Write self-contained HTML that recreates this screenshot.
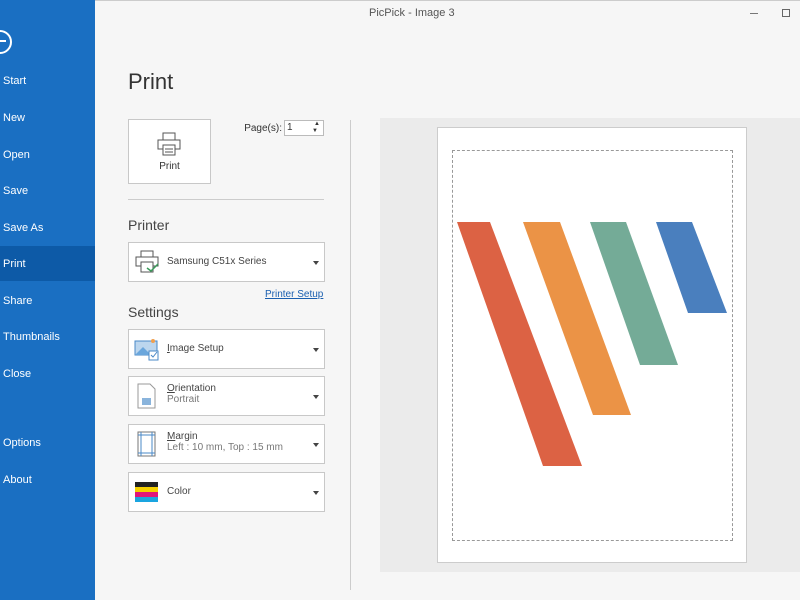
<!DOCTYPE html>
<html><head><style>
body{margin:0;width:800px;height:600px;overflow:hidden;background:#f6f6f6;font-family:"Liberation Sans",sans-serif;position:relative}
.a{position:absolute}
#side{left:0;top:0;width:95px;height:600px;background:#1a6fc2}
.mi{position:absolute;left:3px;color:#fff;font-size:11px}
.box{position:absolute;left:128px;width:195px;background:#fff;border:1px solid #c8c8c8}
.lbl{position:absolute;left:38px;font-size:10px;color:#444}
.sub{color:#777}
.arr{position:absolute;right:5px;width:0;height:0;border-left:3px solid transparent;border-right:3px solid transparent;border-top:4px solid #444}
</style></head><body>
<div class="a" style="left:0;top:0;width:800px;height:1px;background:#ccc"></div>
<div id="side" class="a">
<div class="a" style="left:-12px;top:30px;width:20px;height:20px;border:2px solid #fff;border-radius:50%"></div>
<div class="a" style="left:0;top:40px;width:6px;height:2px;background:#fff"></div>
<div class="a" style="left:0;top:246px;width:95px;height:35px;background:#0d5aa7"></div>
<div class="mi" style="top:75px">Start</div>
<div class="mi" style="top:112px">New</div>
<div class="mi" style="top:149px">Open</div>
<div class="mi" style="top:185px">Save</div>
<div class="mi" style="top:222px">Save As</div>
<div class="mi" style="top:258px">Print</div>
<div class="mi" style="top:295px">Share</div>
<div class="mi" style="top:331px">Thumbnails</div>
<div class="mi" style="top:368px">Close</div>
<div class="mi" style="top:437px">Options</div>
<div class="mi" style="top:474px">About</div>
</div>
<div class="a" style="left:369px;top:7px;font-size:11px;color:#555">PicPick - Image 3</div>
<div class="a" style="left:750px;top:13px;width:8px;height:1px;background:#777"></div>
<div class="a" style="left:782px;top:9px;width:6px;height:6px;border:1px solid #666"></div>
<div class="a" style="left:128px;top:69px;font-size:22px;color:#333">Print</div>
<div class="a" style="left:128px;top:119px;width:81px;height:63px;background:#fff;border:1px solid #c8c8c8">
<svg class="a" style="left:27px;top:12px" width="26" height="24" viewBox="0 0 26 24" fill="none" stroke="#555"><rect x="7" y="1" width="12" height="7"/><rect x="2" y="8" width="22" height="9" fill="#fff"/><rect x="7" y="13" width="12" height="10" fill="#fff"/><line x1="9" y1="17" x2="17" y2="17"/><line x1="9" y1="20" x2="17" y2="20"/></svg>
<div class="a" style="left:0;width:81px;top:41px;text-align:center;font-size:10px;color:#333">Print</div></div>
<div class="a" style="left:230px;width:52px;text-align:right;top:123px;font-size:10px;color:#333;white-space:nowrap">Page(s):</div>
<div class="a" style="left:284px;top:120px;width:38px;height:14px;background:#fff;border:1px solid #bbb;font-size:10px;color:#333;line-height:14px;text-indent:2px">1<span class="a" style="right:3px;top:0;font-size:6px;line-height:7px">▲<br>▼</span></div>
<div class="a" style="left:128px;top:199px;width:196px;height:1px;background:#ccc"></div>
<div class="a" style="left:128px;top:217px;font-size:14px;color:#444">Printer</div>
<div class="box" style="top:242px;height:38px">
<svg class="a" style="left:6px;top:7px" width="26" height="24" viewBox="0 0 26 24" fill="none" stroke="#555"><rect x="6" y="1" width="12" height="6"/><rect x="1" y="7" width="22" height="9" fill="#fff"/><rect x="6" y="12" width="12" height="10" fill="#fff"/><path d="M12 18l4 3 7-7" stroke="#3a9a5a" stroke-width="1.5"/></svg>
<div class="lbl" style="top:13px">Samsung C51x Series</div><div class="arr" style="top:18px"></div></div>
<div class="a" style="left:265px;top:289px;font-size:10px;color:#1a5fb0;text-decoration:underline">Printer Setup</div>
<div class="a" style="left:128px;top:304px;font-size:14px;color:#444">Settings</div>
<div class="box" style="top:329px;height:38px">
<svg class="a" style="left:5px;top:8px" width="26" height="24"><rect x="1" y="3" width="22" height="14" fill="#bcd6ee" stroke="#4a88c7"/><path d="M1 17l8-8 8 8z" fill="#6aa6dc"/><circle cx="19" cy="3" r="2" fill="#f0a050"/><rect x="15" y="13" width="9" height="9" fill="#fff" stroke="#4a88c7"/><path d="M17 17l2 2 4-5" stroke="#4a88c7" fill="none"/></svg>
<div class="lbl" style="top:13px"><u>I</u>mage Setup</div><div class="arr" style="top:18px"></div></div>
<div class="box" style="top:376px;height:38px">
<svg class="a" style="left:8px;top:6px" width="20" height="26"><path d="M1 1h12l5 5v19H1z" fill="#fff" stroke="#999"/><rect x="5" y="15" width="9" height="7" fill="#8ab4dc"/></svg>
<div class="lbl" style="top:6px"><u>O</u>rientation<br><span class="sub">Portrait</span></div><div class="arr" style="top:18px"></div></div>
<div class="box" style="top:424px;height:38px">
<svg class="a" style="left:8px;top:6px" width="20" height="26"><rect x="1" y="1" width="17" height="24" fill="#fff" stroke="#777"/><path d="M4 1v24M15 1v24M1 4h17M1 22h17" stroke="#4a88c7"/></svg>
<div class="lbl" style="top:6px"><u>M</u>argin<br><span class="sub">Left : 10 mm, Top : 15 mm</span></div><div class="arr" style="top:18px"></div></div>
<div class="box" style="top:472px;height:38px">
<div class="a" style="left:6px;top:9px;width:23px;height:5px;background:#222"></div>
<div class="a" style="left:6px;top:14px;width:23px;height:5px;background:#f5d000"></div>
<div class="a" style="left:6px;top:19px;width:23px;height:5px;background:#e0167a"></div>
<div class="a" style="left:6px;top:24px;width:23px;height:5px;background:#1aa5e0"></div>
<div class="lbl" style="top:13px">Color</div><div class="arr" style="top:18px"></div></div>
<div class="a" style="left:350px;top:120px;width:1px;height:470px;background:#ccc"></div>
<div class="a" style="left:380px;top:118px;width:420px;height:454px;background:#ebebeb"></div>
<div class="a" style="left:437px;top:127px;width:308px;height:434px;background:#fff;border:1px solid #ccc"></div>
<div class="a" style="left:452px;top:150px;width:279px;height:389px;border:1px dashed #999"></div>
<svg class="a" style="left:0;top:0" width="800" height="600">
<polygon points="457,222 490,222 582,466 543,466" fill="#dc6244"/>
<polygon points="523,222 560,222 631,415 593,415" fill="#eb9346"/>
<polygon points="590,222 626,222 678,365 640,365" fill="#74ab97"/>
<polygon points="656,222 692,222 727,313 688,313" fill="#4a7fbe"/>
</svg>
</body></html>
